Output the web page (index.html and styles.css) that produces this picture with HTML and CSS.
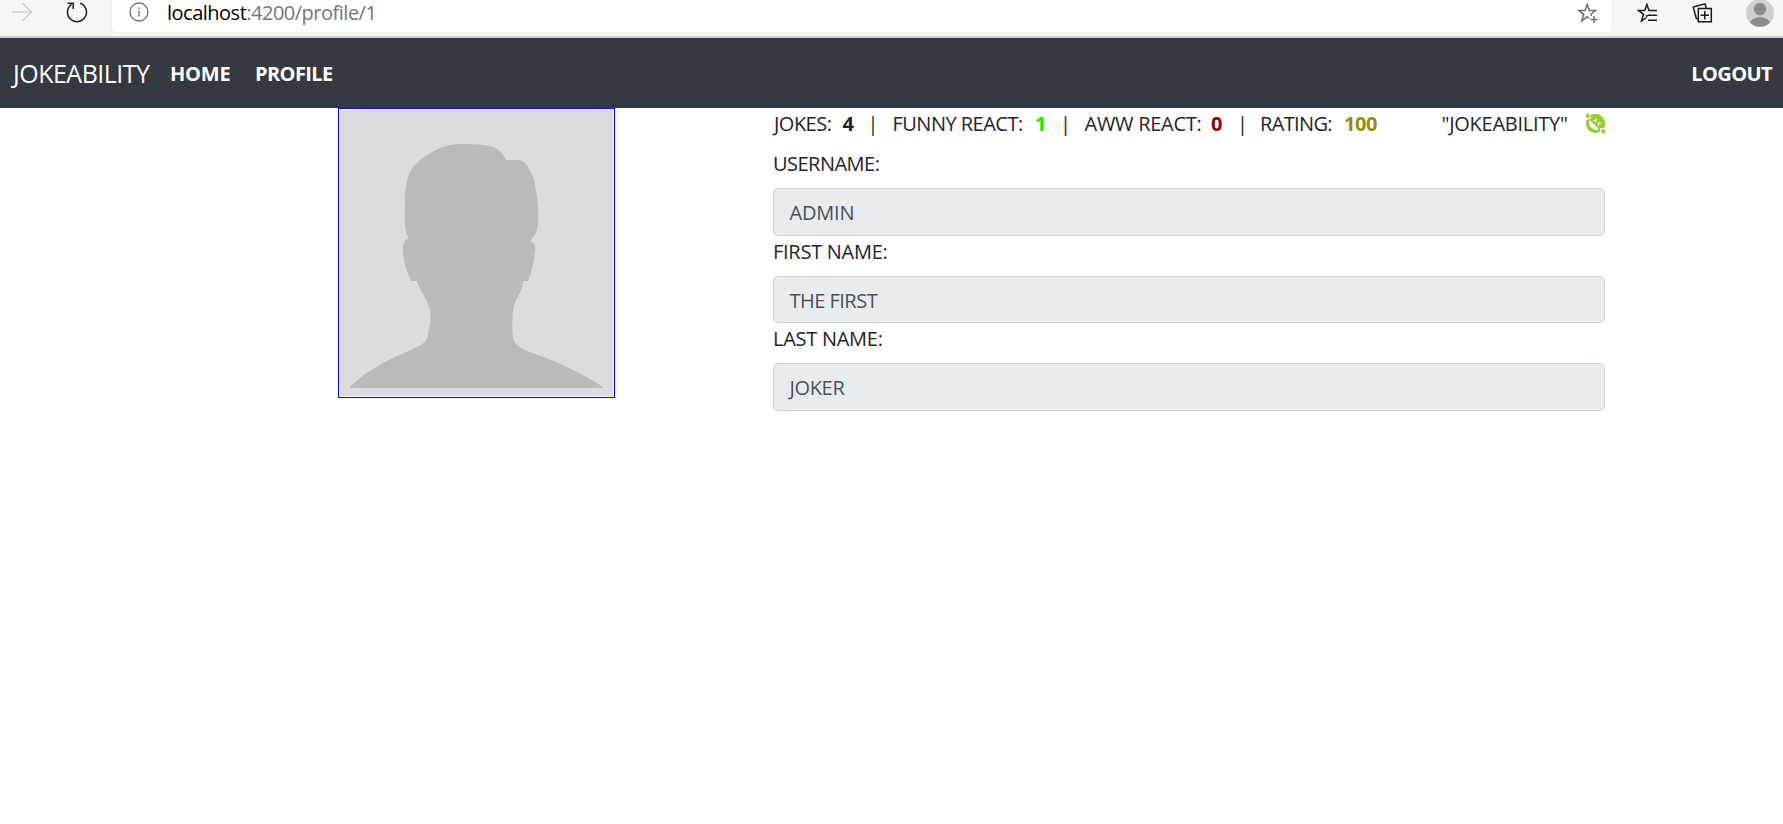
FILE: index.html
```
<!DOCTYPE html>
<html lang="en">
<head>
<meta charset="utf-8">
<title>Jokeability</title>
<link rel="stylesheet" href="styles.css">
</head>
<body>
<header class="browser">
  <svg class="forward" width="22" height="22" viewBox="0 0 22 22"><path d="M1 11H20M11.500 2L20.500 11L11.500 20"/></svg>
  <svg class="reload" width="24" height="24" viewBox="0 0 24 24"><path d="M6.600 4.300A9.500 9.500 0 1 0 15.200 3.200M2.500 3.200H8.200V9"/></svg>
  <div class="address">
    <svg class="info" width="20" height="20" viewBox="0 0 20 20"><circle cx="10" cy="10" r="9"/><path d="M10 8.500V14.500M10 5.200V7"/></svg>
    <span class="url"><span class="host">localhost</span>:4200/profile/1</span>
    <svg class="fav" width="22" height="22" viewBox="0 0 22 22"><path d="M12.500 16.500L10 14.800L4.800 19L6.700 12.300L1.800 8.400H8L10.200 2.500L12.400 8.400H18.600L14.200 12V14M17 14V21M13.500 17.500H20.500"/></svg>
  </div>
  <svg class="tool" width="22" height="22" viewBox="0 0 22 22"><path d="M9.500 15.500L4.500 19L6.500 12.300L1.500 8.400H7.700L9.900 2.500L12 8.400H20M11 13.300H20M11 18.200H20M11 13.300L9 14.500"/></svg>
  <svg class="tool collections" width="22" height="22" viewBox="0 0 22 22"><path d="M6.300 6.500H19.300V19.800H6.300ZM12.800 9V17.500M8.500 13.200H17M6 17L4.300 16.500L1.200 5L13 1.800L14.200 6"/></svg>
  <svg class="user" width="28" height="28" viewBox="0 0 28 28"><circle cx="14" cy="14" r="14" fill="#d2d0cd"/><circle cx="14" cy="10" r="6.200" fill="#8d8b88"/><path d="M4 23.500C7 16.500 21 16.500 24 23.500A14 14 0 0 1 4 23.500" fill="#8d8b88"/></svg>
</header>
<nav class="navbar">
  <a class="brand">JOKEABILITY</a>
  <a class="link home">HOME</a>
  <a class="link">PROFILE</a>
  <a class="link logout">LOGOUT</a>
</nav>
<main class="profile">
  <div class="photo">
    <svg width="273" height="286" viewBox="0 0 273 286"><rect width="273" height="286" fill="#dcdcdc"/><path fill="#bababa" d="M10 277C22 265 35 257 51 249L79 236C87 232 88 227 88 223C91 213 91 205 90 199C87 188 79 180 77 171H71C66 160 63 150 63 139Q63 128 69 129C63 119 65 103 65 87C66 66 71 56 84 47C98 38 105 35 118 34C132 34 143 34 153 37C160 40 164 45 166 50H179C187 51 190 60 193 67C197 80 199 100 198 115C197 123 193 128 190 131Q196 132 195 141C194 152 191 164 188 171H183C183 182 175 188 173 200C172 213 172 224 174 231C178 238 187 241 198 245C220 253 236 261 250 269Q260 275 263 277V278H10Z"/></svg>
  </div>
  <section class="details">
    <div class="stats">
      <span class="mid">JOKES:</span><b>4</b><i>|</i>
      <span class="mid">FUNNY REACT:</span><b class="funny">1</b><i>|</i>
      <span class="wide">AWW REACT:</span><b class="aww">0</b><i>|</i>
      <span class="tight">RATING:</span><b class="rating">100</b>
      <span class="wide">"JOKEABILITY"</span>
      <svg class="face" width="21" height="21" viewBox="0 0 21 21">
        <circle cx="10.500" cy="10.500" r="9.700" fill="#9acd32"/>
        <path fill="#fff" d="M0 0H4.500L6 2.300V6L0 6.800ZM21 21V16.500L19 15L15.200 15.300L14.800 21Z"/>
        <path fill="#fff" d="M4.200 8.300C3.300 13 8 17.700 12.800 16.800C13.700 16.600 13.700 15.800 13 15.300L5.700 8.100C5.200 7.500 4.400 7.600 4.200 8.300Z"/>
        <path fill="#9acd32" d="M5 5.200L2.600 4.800A2.100 2.100 0 1 1 4.700 2.500ZM16.100 16.200L18.500 16.500A2.100 2.100 0 1 1 16.500 18.700Z"/>
        <path d="M8.600 7.600L11 8L11 5.400M13.500 12.700L13.300 10.200L15.900 10.300" fill="none" stroke="#fff" stroke-width="1.200"/>
      </svg>
    </div>
    <label class="mid">USERNAME:</label>
    <div class="field admin">ADMIN</div>
    <label class="wide">FIRST NAME:</label>
    <div class="field mid">THE FIRST</div>
    <label class="wide">LAST NAME:</label>
    <div class="field last">JOKER</div>
  </section>
</main>
</body>
</html>
```
FILE: styles.css
```
body {
  margin: 0;
  background: #fff;
  color: #212529;
  font: 400 20px/30px "Open Sans", sans-serif;
}

/* Letter fitting */
.wide { letter-spacing: -.27px; }
.mid { letter-spacing: -.52px; }
.tight { letter-spacing: -.65px; }

/* Browser toolbar */
.browser {
  display: flex;
  align-items: flex-start;
  height: 36px;
  background: #f7f7f7;
  border-bottom: 2px solid #cdcdcd;
  overflow: hidden;
}
.browser svg {
  flex: none;
  fill: none;
  stroke: #1b1b1b;
  stroke-width: 1.5;
}
.browser .forward {
  margin: 1px 0 0 11px;
  stroke: #cfcfcf;
}
.browser .reload { margin-left: 32px; }
.address {
  box-sizing: border-box;
  display: flex;
  align-items: flex-start;
  width: 1500px;
  height: 32px;
  margin-left: 23px;
  padding: 0 13px 0 17px;
  background: #fff;
  border-radius: 0 0 5px 5px;
  box-shadow: 0 0 4px rgba(0, 0, 0, .07);
}
.browser .info {
  margin-top: 2px;
  stroke: #6e6e6e;
  stroke-width: 1.3;
}
.url {
  flex: 1;
  margin: -2px 0 0 18px;
  color: #767676;
  letter-spacing: -.5px;
}
.host { color: #000; }
.browser .fav {
  margin-top: 2px;
  stroke: #707070;
}
.browser .tool { margin: 2px 0 0 25px; }
.browser .collections { margin-left: 33px; }
.browser .user {
  margin: -1px 0 0 32px;
  stroke: none;
}

/* Navigation */
.navbar {
  display: flex;
  align-items: center;
  height: 70px;
  padding: 0 11px 0 13px;
  background: #343a40;
  color: #fff;
}
.brand {
  width: 157px;
  font-size: 25px;
  letter-spacing: -.5px;
}
.link {
  padding-top: 2px;
  font-weight: 700;
  letter-spacing: -.6px;
}
.home {
  width: 85px;
  letter-spacing: -.2px;
}
.logout { margin-left: auto; }

/* Profile */
.profile {
  display: flex;
  align-items: flex-start;
}
.photo {
  width: 273px;
  height: 286px;
  margin-left: 338px;
  padding: 1px;
  border: 1px solid #00f;
}
.photo svg { display: block; }
.details {
  width: 832px;
  margin-left: 158px;
}
.stats {
  display: grid;
  grid-template-columns: 68.5px 25px 25px 142.5px 25px 24.5px 126.5px 26px 23px 84px 97.5px 143px 22px;
  padding: 1px 0 0 1px;
  margin-bottom: 9px;
  white-space: nowrap;
}
.stats i { font-style: normal; }
.funny { color: #00f000; }
.aww { color: #8b0000; }
.rating {
  color: #968c0a;
  letter-spacing: -.4px;
}
.face { margin-top: 4px; }
label {
  display: block;
  padding-top: 1px;
  margin-bottom: 9px;
}
.field {
  box-sizing: border-box;
  height: 47.5px;
  padding: 9px 15.5px 0;
  border: 1px solid #ced4da;
  border-radius: 5px;
  background: #e9ecef;
  color: #495057;
}
.admin { letter-spacing: -.2px; }
.last { letter-spacing: -.35px; }
```
